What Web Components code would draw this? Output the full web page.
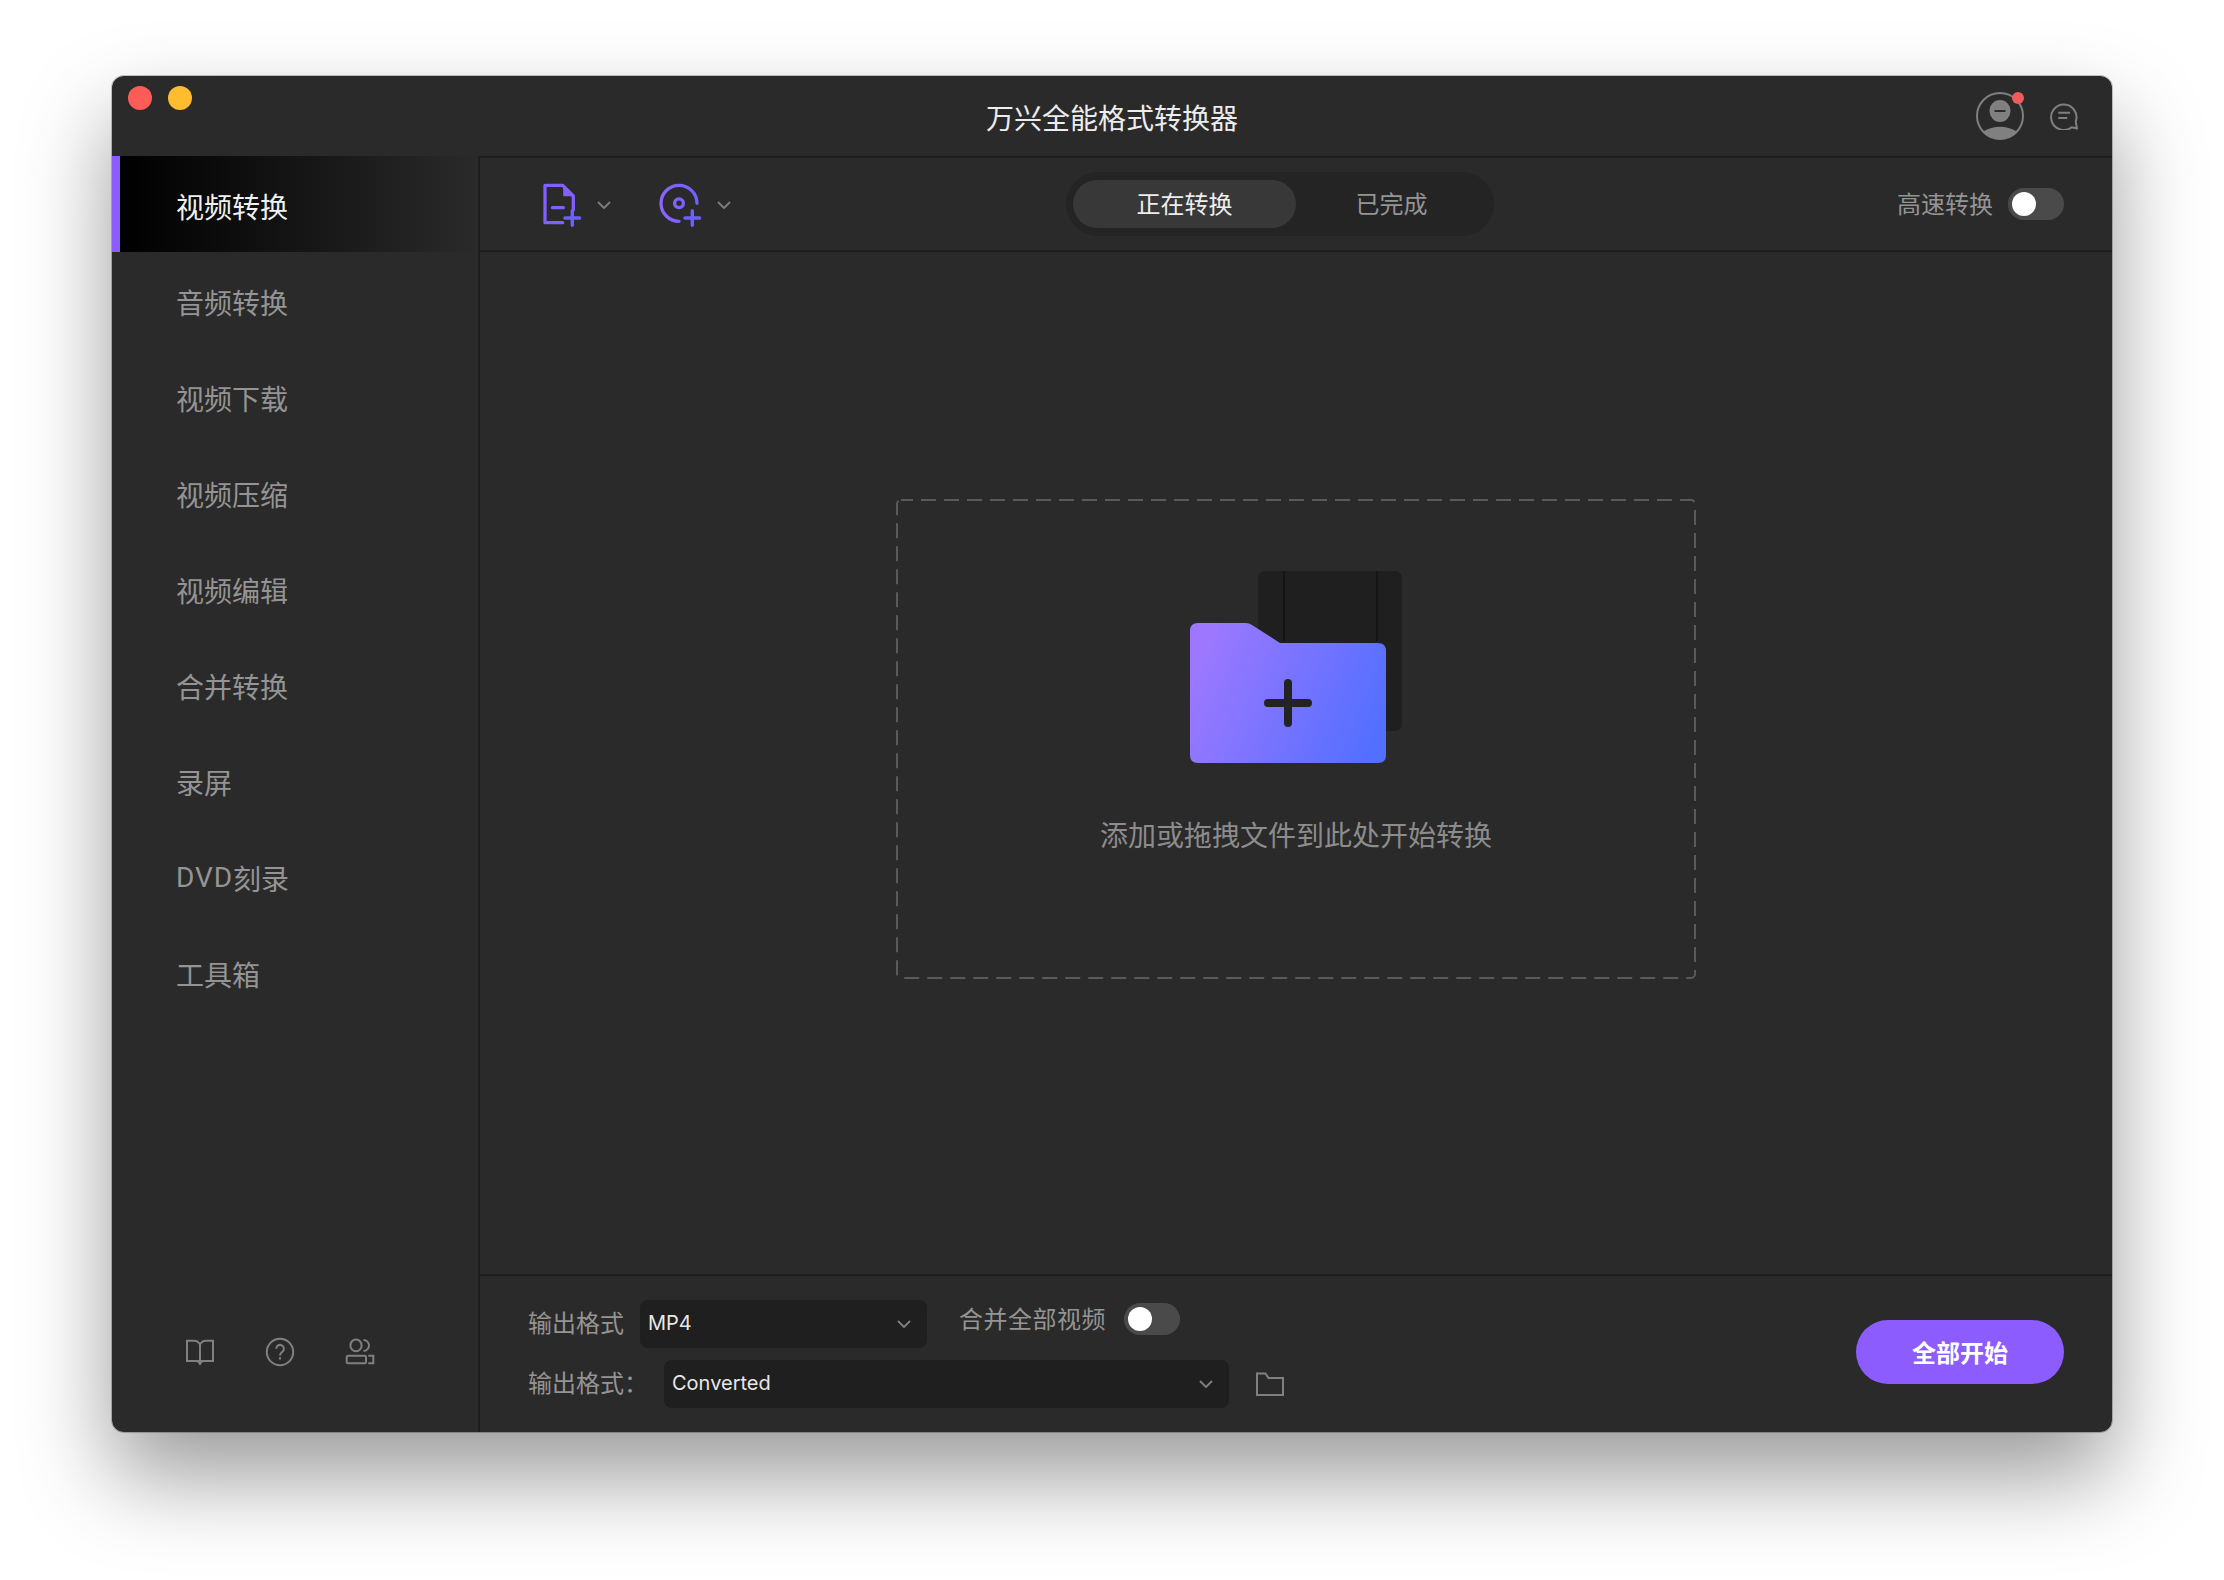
<!DOCTYPE html>
<html lang="zh-CN">
<head>
<meta charset="utf-8">
<title>万兴全能格式转换器</title>
<style>
html,body{margin:0;padding:0;background:#fff;}
body{font-family:Roboto,"Noto Sans CJK SC",sans-serif;}
</style>
</head>
<body>
<app-window>
  <title-bar slot="title">万兴全能格式转换器</title-bar>
  <side-nav slot="nav">
    <nav-item active>视频转换</nav-item>
    <nav-item>音频转换</nav-item>
    <nav-item>视频下载</nav-item>
    <nav-item>视频压缩</nav-item>
    <nav-item>视频编辑</nav-item>
    <nav-item>合并转换</nav-item>
    <nav-item>录屏</nav-item>
    <nav-item><span style="letter-spacing:.9px">DVD</span>刻录</nav-item>
    <nav-item>工具箱</nav-item>
  </side-nav>
  <tool-bar slot="tools"></tool-bar>
  <drop-zone slot="zone">添加或拖拽文件到此处开始转换</drop-zone>
  <footer-bar slot="footer"></footer-bar>
</app-window>
<script>
const ICONS = {
  file:{w:40,h:44,s:`<g fill="none" stroke="#8260ff" stroke-width="3.3" stroke-linecap="round" stroke-linejoin="round"><path d="M20.7 39.7H3V2.3H20.7L31.3 13V27"/><path d="M22 4V12.5H30.5Z" fill="#8260ff" stroke-width="1.6"/><path d="M10.5 24.7H21.3"/></g><path d="M30.3 27.7V42.3M23 35H37.6" fill="none" stroke="#6c60ff" stroke-width="3.4" stroke-linecap="round"/>`},
  disc:{w:44,h:44,s:`<defs><linearGradient id="g" gradientUnits="userSpaceOnUse" x1="2" x2="42" y1="0" y2="0"><stop offset="0" stop-color="#8e64ff"/><stop offset="1" stop-color="#6c60ff"/></linearGradient></defs><g fill="none" stroke="url(#g)" stroke-width="3.3" stroke-linecap="round"><path d="M39 20.3A18 18 0 1 0 21 38.3"/><circle cx="21" cy="20.3" r="4.4"/></g><path d="M34.3 27.7V42.3M27 35H41.6" fill="none" stroke="#6c60ff" stroke-width="3.4" stroke-linecap="round"/>`},
  chev:{w:14,h:8,s:`<path d="M1 1L7 7L13 1" fill="none" stroke="#7c7c7c" stroke-width="2"/>`},
  avatar:{w:48,h:48,s:`<circle cx="24" cy="24" r="23" fill="none" stroke="#808080" stroke-width="2"/><ellipse cx="24" cy="19" rx="10.5" ry="11" fill="#808080"/><path d="M18.5 19H29.5" stroke="#2a2a2a" stroke-width="2"/><path d="M7 39.5Q15 34.7 24 34.7T41 39.5A23 23 0 0 1 7 39.5Z" fill="#808080"/><circle cx="42" cy="6" r="6" fill="#f05a5a"/>`},
  chat:{w:28,h:28,s:`<path d="M27 26.5L21.7 25.2A12.7 12.7 0 1 1 25.7 19.7Z" fill="none" stroke="#808080" stroke-width="2" stroke-linejoin="round"/><path d="M8.3 10.7H20M8.3 16H17.3" stroke="#808080" stroke-width="2"/>`},
  book:{w:30,h:28,s:`<path d="M2 2.7H9Q13 2.7 15 6.5Q17 2.7 21 2.7H28V23H2ZM15 6.5V24" fill="none" stroke="#808080" stroke-width="2"/><path d="M11.5 23H18.5L15 27.5Z" fill="#808080"/>`},
  help:{w:30,h:30,s:`<circle cx="15" cy="15" r="13.2" fill="none" stroke="#808080" stroke-width="2"/><path d="M11.3 11.7A3.8 3.8 0 1 1 17.3 14.8C15.8 15.8 15 16.6 15 18.4" fill="none" stroke="#808080" stroke-width="2"/><path d="M15 20.3V22.6" stroke="#808080" stroke-width="2"/>`},
  users:{w:30,h:28,s:`<ellipse cx="11" cy="7.4" rx="5.6" ry="5.9" fill="none" stroke="#808080" stroke-width="2"/><path d="M18.5 2A5.5 5.5 0 0 1 18.5 13" fill="none" stroke="#808080" stroke-width="2"/><rect x="1.7" y="17.7" width="19.3" height="7.6" rx="1.5" fill="none" stroke="#808080" stroke-width="2"/><path d="M23.3 17.7H28.3V25.3H23.3" fill="none" stroke="#808080" stroke-width="2"/>`},
  folder:{w:28,h:24,s:`<path d="M1 23V1.5H9.5L12.5 6H27V23Z" fill="none" stroke="#808080" stroke-width="2"/>`},
  drop:{w:212,h:192,s:`<defs><linearGradient id="f" x1="0" x2="1" y1="0.35" y2="0.65"><stop offset="0" stop-color="#9d78ff"/><stop offset="1" stop-color="#536fff"/></linearGradient></defs><rect x="68" y="0" width="144" height="160" rx="7" fill="#1f1f1f"/><path d="M94 0V70M187 0V70" stroke="#151515" stroke-width="2"/><path d="M8 52H56Q59 52 62 54L90 72H188Q196 72 196 80V184Q196 192 188 192H8Q0 192 0 184V60Q0 52 8 52Z" fill="url(#f)"/><path d="M98 112V152M78 132H118" fill="none" stroke="#232323" stroke-width="8" stroke-linecap="round"/>`}
};

function def(name, css, html){
  customElements.define(name, class extends HTMLElement{
    constructor(){
      super();
      this.attachShadow({mode:'open'}).innerHTML = `<style>${css}</style>${html}`;
    }
  });
}

customElements.define('x-icon', class extends HTMLElement{
  connectedCallback(){
    if(this.shadowRoot) return;
    const ic = ICONS[this.getAttribute('name')];
    this.attachShadow({mode:'open'}).innerHTML =
      `<style>:host{display:block;flex:none;width:${ic.w}px;height:${ic.h}px}svg{display:block}</style>
       <svg width="${ic.w}" height="${ic.h}" viewBox="0 0 ${ic.w} ${ic.h}">${ic.s}</svg>`;
  }
});

def('app-window', `
  :host{display:block;box-sizing:border-box;width:2224px;height:1580px;padding:76px 112px 148px;background:#fff;
    font-family:Roboto,"Noto Sans CJK SC",sans-serif;color:#949494;}
  .win{width:2000px;height:1356px;background:#2a2a2a;border-radius:12px;overflow:hidden;display:flex;flex-direction:column;}
  .shadow{border-radius:12px;box-shadow:0 44px 90px rgba(0,0,0,.40),0 0 0 1px rgba(0,0,0,.22);}
  .body{flex:1;display:flex;min-height:0;}
  .main{flex:1;display:flex;flex-direction:column;min-width:0;}
  ::slotted(drop-zone){flex:1;}
`,`
  <div class="shadow"><div class="win">
    <slot name="title"></slot>
    <div class="body">
      <slot name="nav"></slot>
      <div class="main">
        <slot name="tools"></slot>
        <slot name="zone"></slot>
        <slot name="footer"></slot>
      </div>
    </div>
  </div></div>
`);

def('title-bar', `
  :host{display:flex;align-items:center;height:80px;box-sizing:border-box;padding:0 32px 0 16px;position:relative;}
  .lights{display:flex;gap:16px;align-self:flex-start;margin-top:10px;}
  .lights i{display:block;width:24px;height:24px;border-radius:50%;}
  .r{background:#ff5c57}.y{background:#febc2e}
  .title{position:absolute;left:0;right:0;top:0;height:80px;line-height:80px;text-align:center;font-size:28px;color:#ededed;padding-top:4px;box-sizing:border-box;}
  .right{margin-left:auto;display:flex;align-items:center;gap:26px;position:relative;padding-right:2px;}
  .right x-icon[name=chat]{margin-bottom:1px;}
`,`
  <div class="lights"><i class="r"></i><i class="y"></i></div>
  <div class="title"><slot></slot></div>
  <div class="right"><x-icon name="avatar"></x-icon><x-icon name="chat"></x-icon></div>
`);

def('side-nav', `
  :host{display:flex;flex-direction:column;flex:none;width:368px;box-sizing:border-box;border-right:2px solid #1e1e1e;}
  .items{display:flex;flex-direction:column;}
  .foot{margin-top:auto;display:flex;align-items:center;gap:50px;padding:0 0 65px 73px;}
`,`
  <div class="items"><slot></slot></div>
  <div class="foot"><x-icon name="book"></x-icon><x-icon name="help"></x-icon><x-icon name="users"></x-icon></div>
`);

def('nav-item', `
  :host{display:flex;align-items:center;height:96px;box-sizing:border-box;padding:3px 0 0 64px;font-size:28px;color:#949494;}
  :host([active]){padding-left:56px;border-left:8px solid #8c5cff;color:#f0f0f0;background:linear-gradient(90deg,#000 0%,#2a2a2a 100%);}
`,`<slot></slot>`);

def('seg-control', `
  :host{display:flex;flex:none;box-sizing:border-box;width:428px;height:64px;padding:8px 7px;border-radius:32px;background:#242424;font-size:24px;}
  .tab{display:flex;align-items:center;justify-content:center;height:48px;box-sizing:border-box;padding-bottom:3px;border-radius:24px;}
  .on{width:223px;background:#383838;color:#ededed;}
  .off{width:191px;color:#949494;}
`,`<div class="tab on">正在转换</div><div class="tab off">已完成</div>`);

def('toggle-switch', `
  :host{display:flex;align-items:center;flex:none;box-sizing:border-box;width:56px;height:32px;padding:0 4px;border-radius:16px;background:#4a4a4a;}
  i{display:block;width:24px;height:24px;border-radius:50%;background:#fff;}
`,`<i></i>`);

def('tool-bar', `
  :host{display:flex;align-items:center;flex:none;height:96px;box-sizing:border-box;padding:0 48px 0 62px;border-top:2px solid #1e1e1e;border-bottom:2px solid #1e1e1e;}
  x-icon{margin-top:2px;}
  .a{margin-left:15px}.d{margin-left:47px}
  seg-control{margin-left:335px;}
  .speed{margin-left:auto;padding-bottom:3px;font-size:24px;color:#949494;white-space:nowrap;}
  toggle-switch{margin-left:15px;}
`,`
  <x-icon name="file"></x-icon><x-icon class="a" name="chev"></x-icon>
  <x-icon class="d" name="disc"></x-icon><x-icon class="a" name="chev"></x-icon>
  <seg-control></seg-control>
  <div class="speed">高速转换</div><toggle-switch></toggle-switch>
`);

def('drop-zone', `
  :host{display:flex;flex-direction:column;align-items:center;padding-top:247px;box-sizing:border-box;min-height:0;}
  .box{position:relative;width:800px;height:480px;box-sizing:border-box;padding-top:72px;display:flex;flex-direction:column;align-items:center;}
  .dash{position:absolute;inset:0;width:800px;height:480px;}
  .txt{margin-top:54px;height:40px;line-height:40px;font-size:28px;color:#8c8c8c;}
`,`
  <div class="box">
    <svg class="dash" viewBox="0 0 800 480"><rect x="1" y="1" width="798" height="478" rx="4" fill="none" stroke="#5a5a5a" stroke-width="2" stroke-dasharray="15 8" stroke-dashoffset="3"/></svg>
    <x-icon name="drop"></x-icon>
    <div class="txt"><slot></slot></div>
  </div>
`);

def('select-box', `
  :host{display:flex;align-items:center;flex:none;box-sizing:border-box;height:48px;padding:0 16px 0 8px;border-radius:8px;background:#1f1f1f;font-family:Inter,Roboto,sans-serif;font-size:20px;color:#e8e8e8;}
  .t{padding-bottom:2px;}
  x-icon{margin-left:auto;}
`,`<span class="t"><slot></slot></span><x-icon name="chev"></x-icon>`);

def('footer-bar', `
  :host{display:flex;flex:none;height:158px;box-sizing:border-box;padding:24px 48px 24px 48px;border-top:2px solid #1e1e1e;font-size:24px;color:#949494;}
  .rows{display:flex;flex-direction:column;gap:12px;}
  .row{display:flex;align-items:center;height:48px;}
  .lab{padding-bottom:5px;}
  .s1{width:287px;margin-left:16px;}
  .s2{width:565px;margin-left:16px;}
  .merge{margin-left:32px;margin-bottom:13px;white-space:nowrap;letter-spacing:.5px;}
  toggle-switch{margin-left:18px;margin-bottom:10px;}
  x-icon[name=folder]{margin-left:27px;}
  .go{margin-left:auto;align-self:flex-start;margin-top:20px;width:208px;height:64px;box-sizing:border-box;padding-bottom:2px;display:flex;align-items:center;justify-content:center;border-radius:32px;background:#8c5cff;color:#fff;font-weight:700;}
`,`
  <div class="rows">
    <div class="row"><span class="lab">输出格式</span><select-box class="s1">MP4</select-box><span class="merge">合并全部视频</span><toggle-switch></toggle-switch></div>
    <div class="row"><span class="lab">输出格式：</span><select-box class="s2">Converted</select-box><x-icon name="folder"></x-icon></div>
  </div>
  <div class="go">全部开始</div>
`);
</script>
</body>
</html>
